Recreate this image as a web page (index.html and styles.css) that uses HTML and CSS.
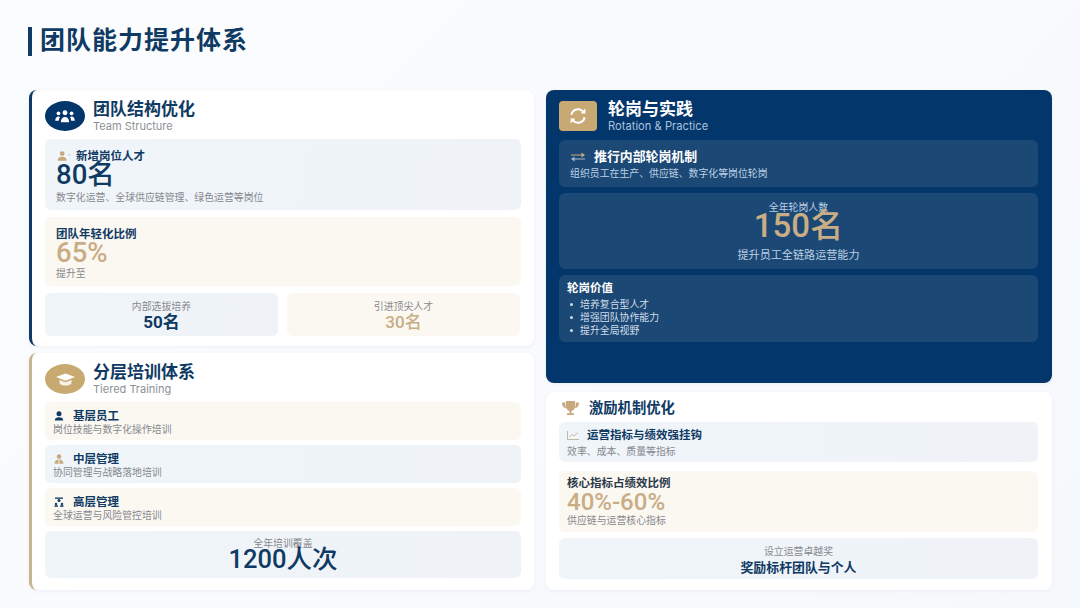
FILE: index.html
```html
<!DOCTYPE html>
<html lang="zh-CN">
<head>
<meta charset="utf-8">
<title>团队能力提升体系</title>
<link rel="stylesheet" href="styles.css">
</head>
<body>
<main class="page">
  <h1 class="page-title">团队能力提升体系</h1>
  <div class="columns">
    <div class="column left">
      <section class="card accent-navy card-structure">
        <header class="card-head">
          <span class="badge badge-navy">
            <svg width="22" height="15" viewBox="0 0 22 16" fill="#fff"><circle cx="11" cy="4" r="2.6"/><path d="M6.600 14c0-3.400 1.700-5.600 4.400-5.600s4.400 2.200 4.400 5.600z"/><circle cx="4" cy="4.600" r="2"/><circle cx="18" cy="4.600" r="2"/><path d="M.6 12.600c0-2.800 1.300-4.600 3.400-4.600 .7 0 1.200.2 1.700.5-.8 1-1.200 2.400-1.300 4.100zM21.400 12.600c0-2.800-1.300-4.600-3.400-4.600-.7 0-1.200.2-1.700.5.8 1 1.200 2.400 1.300 4.100z"/></svg>
          </span>
          <div class="head-text">
            <h2 class="card-title">团队结构优化</h2>
            <p class="card-sub">Team Structure</p>
          </div>
        </header>
        <div class="block block-cool talent">
          <div class="label-row gap-6">
            <svg class="icon" width="14" height="10" viewBox="0 0 14 11" fill="#c8a97e"><circle cx="5" cy="2.800" r="2.600"/><path d="M0 10.600c0-2.800 2-4.400 5-4.400s5 1.600 5 4.400z"/><rect x="11.500" y="3.600" width="2.500" height="1.200" opacity=".7"/></svg>
            <span class="label">新增岗位人才</span>
          </div>
          <div class="num num-80 navy">80名</div>
          <p class="note">数字化运营、全球供应链管理、绿色运营等岗位</p>
        </div>
        <div class="block block-warm youth">
          <div class="label">团队年轻化比例</div>
          <div class="num num-65 gold">65%</div>
          <p class="note">提升至</p>
        </div>
        <div class="split">
          <div class="block block-cool cell">
            <p class="note center">内部选拔培养</p>
            <div class="num-small strong navy">50名</div>
          </div>
          <div class="block block-warm cell">
            <p class="note center">引进顶尖人才</p>
            <div class="num-small gold">30名</div>
          </div>
        </div>
      </section>

      <section class="card accent-gold card-tier">
        <header class="card-head">
          <span class="badge badge-gold">
            <svg width="21" height="15" viewBox="0 0 22 16" fill="#fff"><path d="M11 1.500 .8 5.400 11 9.400l10.200-4z"/><path d="M4.600 8.600v3.600c1.600 1.600 3.900 2.300 6.400 2.300s4.800-.7 6.400-2.300V8.600L11 11z" opacity=".85"/></svg>
          </span>
          <div class="head-text">
            <h2 class="card-title">分层培训体系</h2>
            <p class="card-sub">Tiered Training</p>
          </div>
        </header>
        <div class="block block-warm tier">
          <div class="label-row gap-9">
            <svg class="icon" width="10" height="10" viewBox="0 0 10 10" fill="#0f3a63"><circle cx="5" cy="2.800" r="2.500"/><path d="M.8 9.600c0-2.400 1.700-3.400 4.200-3.400s4.200 1 4.200 3.400z"/></svg>
            <span class="label">基层员工</span>
          </div>
          <p class="note">岗位技能与数字化操作培训</p>
        </div>
        <div class="block block-cool tier">
          <div class="label-row gap-9">
            <svg class="icon" width="10" height="10" viewBox="0 0 10 10" fill="#c8a97e"><circle cx="5" cy="2.600" r="2.300"/><path d="M.6 9.800c0-2.800 1.800-4.200 4.400-4.200s4.400 1.400 4.400 4.200z"/><rect x="4.500" y="5.600" width="1" height="4.200" fill="#f1f5f9"/></svg>
            <span class="label">中层管理</span>
          </div>
          <p class="note">协同管理与战略落地培训</p>
        </div>
        <div class="block block-warm tier">
          <div class="label-row gap-9">
            <svg class="icon" width="10" height="10" viewBox="0 0 10 10" fill="#0f3a63"><rect x="1" y=".5" width="8" height="1.300"/><circle cx="5" cy="3.400" r="1.500"/><circle cx="2" cy="7" r="1.200"/><circle cx="8" cy="7" r="1.200"/><rect x=".5" y="8.300" width="3.400" height="1.500"/><rect x="6.100" y="8.300" width="3.400" height="1.500"/></svg>
            <span class="label">高层管理</span>
          </div>
          <p class="note">全球运营与风险管控培训</p>
        </div>
        <div class="block block-cool coverage">
          <p class="note center tight">全年培训覆盖</p>
          <div class="num-cover navy center">1200人次</div>
        </div>
      </section>
    </div>

    <div class="column right">
      <section class="card dark">
        <header class="card-head">
          <span class="badge badge-square">
            <svg width="18" height="16" viewBox="0 0 18 16" fill="none" stroke="#fff" stroke-width="2.100"><path d="M2.400 6.800A6.800 6.800 0 0 1 14.200 3.600"/><path d="M15.600 9.200A6.800 6.800 0 0 1 3.800 12.400"/><path d="M16.400 .6v4.800h-4.800zM1.600 15.400v-4.800h4.800z" fill="#fff" stroke="none"/></svg>
          </span>
          <div class="head-text">
            <h2 class="card-title white">轮岗与实践</h2>
            <p class="card-sub wide pale">Rotation &amp; Practice</p>
          </div>
        </header>
        <div class="block block-dark mech">
          <div class="label-row gap-8">
            <svg class="icon" width="14" height="10" viewBox="0 0 14 10" fill="#c8a97e"><path d="M0 2.400h10.500V.4L14 3l-3.500 2.400V3.600H0z"/><path d="M14 7.600H3.500v2L0 7l3.500-2.400v1.800H14z" fill="#a9b6c4"/></svg>
            <span class="label-13 white">推行内部轮岗机制</span>
          </div>
          <p class="note pale">组织员工在生产、供应链、数字化等岗位轮岗</p>
        </div>
        <div class="block block-dark rotation">
          <p class="note center pale tight">全年轮岗人数</p>
          <div class="num-rotation gold center">150名</div>
          <p class="note-11 center pale">提升员工全链路运营能力</p>
        </div>
        <div class="block block-dark value">
          <div class="label white">轮岗价值</div>
          <ul class="bullets">
            <li>培养复合型人才</li>
            <li>增强团队协作能力</li>
            <li>提升全局视野</li>
          </ul>
        </div>
      </section>

      <section class="card card-incentive">
        <header class="mini-head">
          <svg class="icon" width="17" height="15" viewBox="0 0 17 15" fill="#c8a97e"><path d="M4 0h9v5.500c0 2.500-1.800 4.100-3.500 4.400v2.300h2.500V14H5v-1.800h2.500V9.900C5.800 9.600 4 8 4 5.500z"/><path d="M3.400 1.400H0c0 3.400 1.400 5.400 4.400 5.800-.6-.8-1-1.700-1-2.700zM13.600 1.400H17c0 3.400-1.400 5.400-4.400 5.800.6-.8 1-1.700 1-2.700z"/></svg>
          <h2 class="mini-title">激励机制优化</h2>
        </header>
        <div class="block block-cool metric">
          <div class="label-row gap-7">
            <svg class="icon" width="12" height="9" viewBox="0 0 12 9" fill="none" stroke="#c4b8a4" stroke-width="1"><path d="M.5 0v8.500H12"/><path d="M2.500 6 5 3.500l2 1.500 4-3.500"/></svg>
            <span class="label">运营指标与绩效强挂钩</span>
          </div>
          <p class="note">效率、成本、质量等指标</p>
        </div>
        <div class="block block-warm ratio">
          <div class="label dark-ink">核心指标占绩效比例</div>
          <div class="num num-ratio gold">40%-60%</div>
          <p class="note">供应链与运营核心指标</p>
        </div>
        <div class="block block-cool award">
          <p class="note center">设立运营卓越奖</p>
          <div class="label-13 navy center">奖励标杆团队与个人</div>
        </div>
      </section>
    </div>
  </div>
</main>
</body>
</html>
```
FILE: styles.css
```css
* { box-sizing: border-box; margin: 0; padding: 0; }

html, body { width: 1080px; height: 608px; overflow: hidden; }

body {
  background: linear-gradient(135deg, #fbfcfe, #f6f9fc);
  font-family: Inter, "Noto Sans CJK SC", sans-serif;
  color: #0f3a63;
}

.page { padding: 27px 28px 18px 29px; }

.page-title {
  height: 29px;
  margin-left: -1px;
  margin-bottom: 34px;
  padding-left: 8px;
  border-left: 4px solid #0f3a63;
  font-size: 25px;
  line-height: 26px;
  font-weight: 700;
  letter-spacing: 1px;
  color: #0f3a63;
}

.columns { display: grid; grid-template-columns: 505px 506px; column-gap: 12px; }

.column { display: flex; flex-direction: column; }
.left { gap: 7px; }
.right { gap: 9px; }

.card {
  background: #fff;
  border-radius: 8px;
  box-shadow: 0 1px 4px rgba(15, 58, 99, .06);
  padding: 11px 13px 0;
}

.accent-navy { border-left: 3px solid #0f3a63; }
.accent-gold { border-left: 3px solid #c8b48f; }

.card-structure { height: 256px; }
.card-tier { height: 237px; }
.dark { height: 293px; padding-right: 14px; background: #03366b; }
.card-incentive { height: 198px; padding-top: 8px; padding-right: 14px; }

.card-head { display: flex; align-items: center; gap: 8px; height: 30px; margin-bottom: 8px; }
.dark .card-head { gap: 11px; margin-bottom: 9px; }

.badge { flex: none; display: flex; align-items: center; justify-content: center; height: 30px; }
.badge-navy { width: 40px; border-radius: 50%; background: #03366b; }
.badge-gold { width: 40px; border-radius: 50%; background: #c8a96f; }
.badge-square { width: 38px; border-radius: 4px; background: #c8a873; }

.head-text { display: flex; flex-direction: column; }

.card-title { font-size: 17px; line-height: 18px; font-weight: 700; color: #0f3a63; }
.card-sub { font-size: 11px; line-height: 13px; color: #8c9196; margin-top: 2px; }
.card-sub.wide { font-size: 11.200px; color: #a9c2de; }

.block { border-radius: 6px; }
.block-cool { background: linear-gradient(100deg, #f0f5fa, #eff3f8); }
.block-warm { background: #fbf7f1; }
.block-dark { background: #1b4874; }

.talent { height: 71px; padding: 10px 11px 0; margin-bottom: 7px; }
.youth { height: 69px; padding: 10px 11px 0; margin-bottom: 7px; }

.split { display: grid; grid-template-columns: 233px 233px; column-gap: 9px; }
.cell { height: 43px; padding-top: 6px; }

.tier { height: 38px; padding: 7px 7px 0 8px; margin-bottom: 5px; }
.coverage { height: 47px; padding-top: 8px; }

.label-row { display: flex; align-items: center; height: 14px; }
.gap-6 { gap: 5px; padding-left: 1px; }
.gap-7 { gap: 8px; }
.gap-8 { gap: 9px; padding-left: 1px; }
.gap-9 { gap: 9px; padding-left: 1px; }

.icon { flex: none; display: block; }

.label { font-size: 11.500px; line-height: 14px; font-weight: 700; color: #0f3a63; }
.label-13 { font-size: 12.900px; line-height: 16px; font-weight: 700; }

.num,
.num-small,
.num-cover,
.num-rotation { font-family: Roboto, "Noto Sans CJK SC", sans-serif; font-weight: 500; }
.num-80 { font-size: 27.500px; line-height: 25px; margin-top: -1px; }
.num-65 { font-size: 27.500px; line-height: 25px; margin-top: -1px; }
.num-ratio { font-size: 24px; line-height: 24px; }
.num-small { font-size: 17px; line-height: 18px; text-align: center; }
.num-small.strong { font-weight: 700; }
.num-cover { font-size: 25.500px; line-height: 27px; margin-top: -2px; }
.num-rotation { font-size: 33px; line-height: 32px; margin-top: -2px; }

.note { font-size: 9.900px; line-height: 14px; color: #85898e; }
.note-11 { font-size: 11.100px; line-height: 14px; color: #85898e; }

.talent .note { margin-top: 3px; }
.youth .note { margin-top: 1px; }
.tier .note { line-height: 13px; }

.center { text-align: center; }
.tight { line-height: 9px; }

.navy { color: #0f3a63; }
.gold { color: #c8ad85; }
.white { color: #fff; }
.pale { color: #bdd0e4; }
.dark-ink { color: #2b3a4a; }

.mech { height: 47px; padding: 10px 11px 0; margin-bottom: 6px; }
.mech .note { margin-top: 2px; }

.rotation { height: 76px; padding-top: 10px; margin-bottom: 6px; }
.rotation .note-11 { margin-top: 6px; }

.value { height: 67px; padding: 7px 8px 0; }
.value .label { line-height: 13px; }

.bullets { list-style: none; margin-top: 3px; }
.bullets li {
  position: relative;
  padding-left: 13px;
  font-size: 9.900px;
  line-height: 13px;
  color: #d2deea;
}
.bullets li::before {
  content: "";
  position: absolute;
  left: 3px;
  top: 5px;
  width: 3px;
  height: 3px;
  border-radius: 50%;
  background: #d2deea;
}

.mini-head { display: flex; align-items: center; gap: 10px; height: 18px; margin-left: 3px; margin-bottom: 5px; margin-top: -1px; }
.mini-title { font-size: 14.300px; line-height: 18px; font-weight: 700; color: #0f3a63; }

.metric { height: 40px; padding: 6px 8px 0; margin-bottom: 9px; margin-top: 2px; }
.metric .note { margin-top: 2px; }

.ratio { height: 61px; padding: 5px 8px 0; margin-bottom: 6px; }
.ratio .note { margin-top: -1px; }

.award { height: 41px; padding-top: 6px; }
.award .label-13 { margin-top: 2px; }
```
